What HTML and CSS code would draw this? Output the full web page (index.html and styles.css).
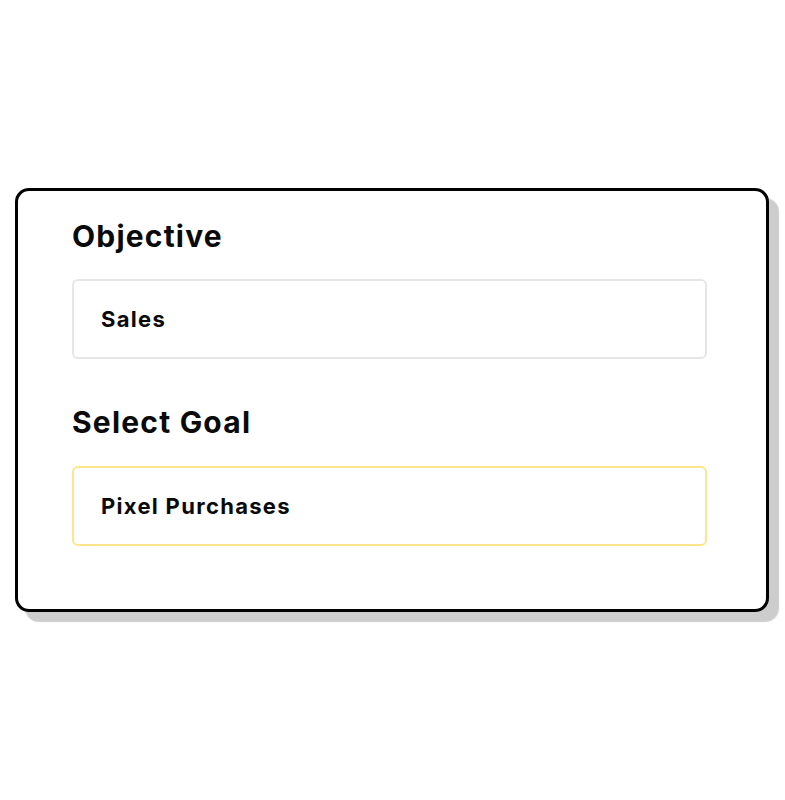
FILE: index.html
```html
<!DOCTYPE html>
<html>
<head>
<meta charset="utf-8">
<link rel="stylesheet" href="styles.css">
</head>
<body>
<div class="stage">
  <div class="card">
    <h2 class="label">Objective</h2>
    <div class="field field-neutral">Sales</div>
    <h2 class="label label-second">Select Goal</h2>
    <div class="field field-active">Pixel Purchases</div>
  </div>
</div>
</body>
</html>
```
FILE: styles.css
```css
html, body {
  margin: 0;
  padding: 0;
  background: #ffffff;
}
body {
  font-family: "Inter", "Liberation Sans", sans-serif;
  color: #0a0a0a;
}
.stage {
  width: 785px;
  height: 800px;
  padding: 188px 0 0 15px;
  box-sizing: border-box;
}
.card {
  width: 754px;
  height: 424px;
  box-sizing: border-box;
  border: 3px solid #000000;
  border-radius: 14px;
  box-shadow: 10px 10px 1px #cdcdcd;
  background: #ffffff;
  padding: 28px 0 0 54px;
}
.label {
  margin: 0;
  font-size: 30px;
  line-height: 34px;
  font-weight: 700;
  letter-spacing: 1.2px;
}
.label-second {
  margin-top: 46px;
}
.field {
  margin-top: 26px;
  width: 635px;
  height: 80px;
  box-sizing: border-box;
  border-radius: 6px;
  border: 2px solid #e6e6e6;
  padding-left: 27px;
  display: flex;
  align-items: center;
  font-size: 22px;
  font-weight: 700;
  letter-spacing: 1.3px;
}
.field-active {
  border-color: #fce58c;
  margin-top: 27px;
}
```
